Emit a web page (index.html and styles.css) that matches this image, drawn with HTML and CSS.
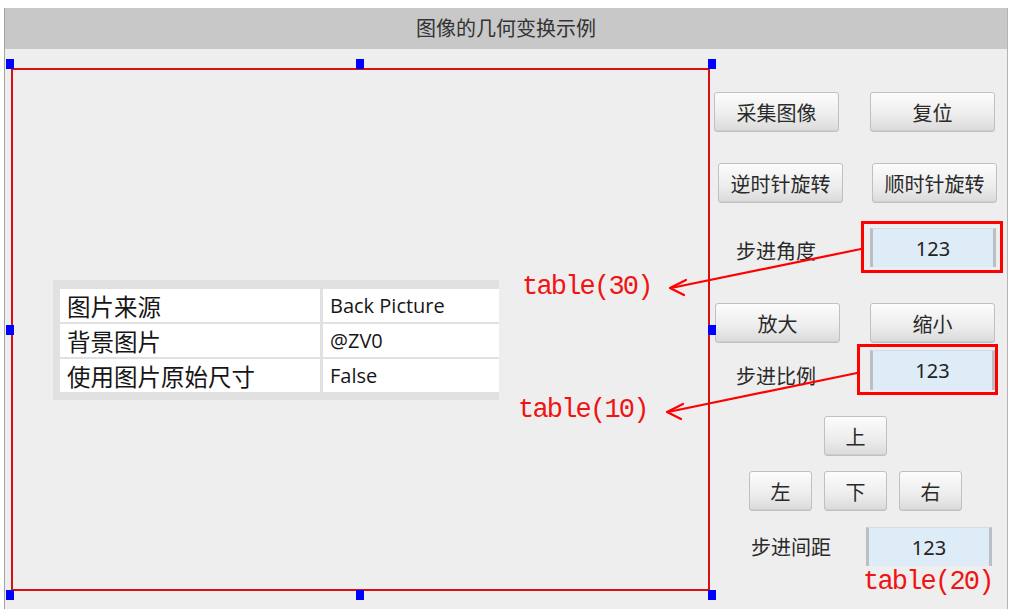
FILE: index.html
```html
<!DOCTYPE html>
<html lang="zh-CN">
<head>
<meta charset="UTF-8">
<title>图像的几何变换示例</title>
<link rel="stylesheet" href="styles.css">
</head>
<body>

<div class="page">

<div class="window">

<div class="titlebar">图像的几何变换示例</div>

<div class="content">

<div class="stage">
<div class="selbox">
<span class="handle h-tl"></span>
<span class="handle h-tm"></span>
<span class="handle h-tr"></span>
<span class="handle h-ml"></span>
<span class="handle h-mr"></span>
<span class="handle h-bl"></span>
<span class="handle h-bm"></span>
<span class="handle h-br"></span>

<div class="props">
<div class="cell key">图片来源</div><div class="cell val">Back Picture</div>
<div class="cell key">背景图片</div><div class="cell val">@ZV0</div>
<div class="cell key">使用图片原始尺寸</div><div class="cell val">False</div>
</div>
</div>
</div>

<div class="panel">
<div class="row r1">
<button class="btn">采集图像</button>
<button class="btn">复位</button>
</div>
<div class="row r2">
<button class="btn">逆时针旋转</button>
<button class="btn">顺时针旋转</button>
</div>
<div class="row r3">
<span class="label l1">步进角度</span>
<div class="mark m1"><div class="field">123</div></div>
</div>
<div class="row r4">
<button class="btn">放大</button>
<button class="btn">缩小</button>
</div>
<div class="row r5">
<span class="label l2">步进比例</span>
<div class="mark m2"><div class="field f2">123</div></div>
</div>
<div class="row r6">
<button class="btn sm">上</button>
</div>
<div class="row r7">
<button class="btn sm">左</button>
<button class="btn sm">下</button>
<button class="btn sm">右</button>
</div>
<div class="row r8">
<span class="label l3">步进间距</span>
<div class="field">123</div>
</div>
</div>

</div>
</div>

<!-- annotations drawn over the designer -->
<svg class="arrows" width="1014" height="613" viewBox="0 0 1014 613">
<g fill="none" stroke="#f00" stroke-width="2.2" stroke-linecap="round" stroke-linejoin="round">
<path d="M861 249 L671 288"/>
<path d="M686 280 L670 288 L684 295"/>
<path d="M857 373 L668 412"/>
<path d="M683 404 L667 412 L681 419"/>
</g>
</svg>
<span class="note n30">table(30)</span>
<span class="note n10">table(10)</span>
<span class="note n20">table(20)</span>

</div>

</body>
</html>
```

FILE: styles.css
```css
body{
    margin:0;
    background:#fff;
    font-family:"Noto Sans CJK SC","Noto Sans",sans-serif;
    color:#2a2a2a;
}

.page{
    position:relative;
    width:1014px;
    height:613px;
    overflow:hidden;
}

.window{
    margin:8px 0 0 4px;
    width:1004px;
    height:601px;
    box-sizing:border-box;
    border-left:1px solid #a4a4a4;
    border-right:1px solid #b4b4b4;
    background:#eeeeee;
}

.titlebar{
    height:41px;
    line-height:40px;
    background:#c8c8c8;
    text-align:center;
    font-size:20px;
    color:#333;
}

.content{
    display:flex;
}

/* left: selected picture control */
.stage{
    width:705px;
    padding:19px 0 0 6px;
    box-sizing:border-box;
}

.selbox{
    position:relative;
    width:699px;
    height:523px;
    box-sizing:border-box;
    border:2px solid #d81010;
}

.handle{
    position:absolute;
    width:8px;
    height:10px;
    background:#0000ff;
}

.h-tl{ left:-7px; top:-11px; }
.h-tm{ left:343px; top:-11px; }
.h-tr{ right:-8px; top:-11px; }
.h-ml{ left:-7px; top:255px; }
.h-mr{ right:-8px; top:255px; }
.h-bl{ left:-7px; bottom:-11px; }
.h-bm{ left:343px; bottom:-11px; }
.h-br{ right:-8px; bottom:-11px; }

.props{
    margin:210px 0 0 40px;
    width:446px;
    height:120px;
    box-sizing:border-box;
    padding:9px 0 0 7px;
    background:#e1e1e1;
    overflow:hidden;
    display:grid;
    grid-template-columns:260px 176px;
    grid-auto-rows:33px;
    column-gap:3px;
    row-gap:2px;
}

.cell{
    background:#fff;
    padding-left:7px;
    display:flex;
    align-items:center;
    white-space:nowrap;
}

.key{
    font-size:23.5px;
    color:#161616;
}

.val{
    font-family:"Open Sans","Noto Sans",sans-serif;
    font-size:20px;
    color:#161616;
}

/* right: control panel */
.panel{
    flex:1;
    display:flex;
    flex-direction:column;
}

.row{
    display:flex;
    align-items:center;
}

.r1{ margin-top:43px; padding-left:4px; gap:31px; }
.r2{ margin-top:31px; padding-left:8px; gap:29px; }
.r3{ margin-top:18px; padding-left:26px; }
.r4{ margin-top:30px; padding-left:5px; gap:30px; }
.r5{ margin-top:1px; padding-left:26px; }
.r6{ margin-top:21px; padding-left:114px; }
.r7{ margin-top:15px; padding-left:39px; gap:12px; }
.r8{ margin-top:16px; padding-left:41px; }

.btn{
    width:125px;
    height:40px;
    padding:0;
    border:1px solid #c0c0c0;
    border-radius:3px;
    background:linear-gradient(#fcfcfc,#ececec 60%,#dadada);
    box-shadow:inset 0 -1px 0 #cfcfcf;
    font-family:inherit;
    font-size:20px;
    color:#2a2a2a;
}

.btn.sm{
    width:63px;
}

.label{
    font-size:20px;
    color:#2a2a2a;
}

.l1{ width:125px; padding-top:6px; }
.l2{ width:121px; padding-top:11px; }
.l3{ width:115px; }

.mark{
    border:3px solid #f00;
}

.m1{ padding:4px 4px 3px 6px; }
.m2{ padding:3px 0 2px 10px; }

.field{
    width:126px;
    height:39px;
    box-sizing:border-box;
    background:#deecf7;
    border-left:3px solid #b9bfc5;
    border-right:3px solid #b9bfc5;
    border-top:1px solid #d2dde6;
    display:flex;
    align-items:center;
    justify-content:center;
    font-family:"Noto Sans",sans-serif;
    font-size:20px;
    color:#222;
}

.f2{
    width:125px;
    height:40px;
}

/* red annotation text */
.arrows{
    position:absolute;
    left:0;
    top:0;
}

.note{
    position:absolute;
    font-family:"Liberation Mono",monospace;
    font-size:27px;
    line-height:27px;
    letter-spacing:-1.8px;
    color:#f01414;
    white-space:nowrap;
}

.n30{ left:522px; top:274px; }
.n10{ left:518px; top:397px; }
.n20{ left:863px; top:569px; }
```
